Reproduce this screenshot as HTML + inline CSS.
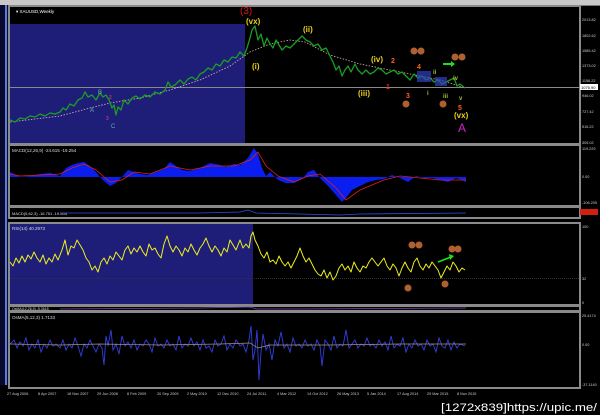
<!DOCTYPE html>
<html><head><meta charset="utf-8"><style>
html,body{margin:0;padding:0;background:#000;width:600px;height:415px;overflow:hidden}
svg{display:block}
text{font-family:"Liberation Sans",sans-serif}
</style></head><body>
<svg width="600" height="415" viewBox="0 0 600 415" xmlns="http://www.w3.org/2000/svg">
<rect width="600" height="415" fill="#000"/>
<rect x="0" y="0" width="600" height="5" fill="#c8c8c8"/>
<rect x="0" y="5" width="600" height="1" fill="#777"/>
<rect x="0" y="5" width="8" height="380" fill="#0a0a30"/>
<rect x="5" y="5" width="2" height="380" fill="#5a7fd0"/>
<g fill="none" stroke="#8a8a8a" stroke-width="2">
<rect x="9" y="6" width="571" height="138"/>
<rect x="9" y="145" width="571" height="61"/>
<rect x="9" y="207" width="571" height="11"/>
<rect x="9" y="223" width="571" height="82"/>
<rect x="9" y="306" width="571" height="5"/>
<rect x="9" y="312" width="571" height="76"/>
</g>
<rect x="10" y="24" width="235" height="119" fill="#1e1e78"/>
<line x1="10" y1="87.5" x2="579" y2="87.5" stroke="#8a8a8a"/>
<text x="16" y="13" fill="#fff" font-size="4.5">▾ XAUUSD,Weekly</text>
<polyline fill="none" stroke="#e0b0b0" stroke-width="0.8" stroke-dasharray="1.5,1.5" points="10,122 60,116 90,108 110,103 140,98 170,90 200,80 230,66 250,52 270,44 290,40 305,42 330,55 360,64 400,72 440,80 465,88"/>
<polyline fill="none" stroke="#1a9e22" stroke-width="1.3" stroke-linejoin="round" points="10,120 15,122 20,118 25,119 30,116 35,117 40,114 45,116 50,113 55,114 60,112 63,108 66,110 70,104 74,106 78,100 82,98 85,92 88,97 92,95 96,100 100,93 103,97 106,95 109,100 112,108 114,105 116,115 118,107 121,110 124,100 128,104 132,98 136,96 140,99 145,95 150,97 155,92 160,94 165,90 168,82 171,87 175,85 180,80 184,84 188,79 192,77 196,80 200,74 204,72 208,68 212,70 216,64 220,66 224,60 228,62 232,57 236,58 240,52 244,56 247,48 250,38 252,30 255,26 258,40 261,34 264,46 267,38 270,44 273,48 276,40 279,45 282,50 286,46 290,48 294,44 298,40 302,36 306,40 310,42 314,46 318,44 322,50 326,48 330,56 333,62 336,70 339,66 342,76 345,70 348,66 351,72 355,64 358,70 362,74 366,70 370,74 374,72 378,68 382,70 386,74 390,72 394,70 398,74 402,72 406,76 410,80 414,74 418,78 422,76 426,80 430,78 434,82 438,80 442,84 446,82 450,80 454,78 457,86 460,84 465,88"/>
<rect x="417" y="71" width="14" height="11" fill="#3040c0" opacity="0.7"/>
<rect x="435" y="77" width="12" height="9" fill="#3040c0" opacity="0.7"/>
<g font-weight="bold" font-size="8">
<text x="240" y="14" fill="#e01010" font-size="10" font-weight="normal">(3)</text>
<text x="246" y="24" fill="#e8d020">(vx)</text>
<text x="252" y="69" fill="#e8d020">(i)</text>
<text x="303" y="32" fill="#e8d020">(ii)</text>
<text x="358" y="96" fill="#e8d020">(iii)</text>
<text x="371" y="62" fill="#e8d020">(iv)</text>
<text x="454" y="118" fill="#e8d020">(vx)</text>
<text x="386" y="89" fill="#e03010" font-size="7">1</text>
<text x="391" y="63" fill="#ff6020" font-size="7">2</text>
<text x="406" y="98" fill="#ff6020" font-size="7">3</text>
<text x="417" y="69" fill="#ff6020" font-size="7">4</text>
<text x="458" y="110" fill="#ff6020" font-size="7">5</text>
<text x="433" y="74" fill="#a0c030" font-size="6">ii</text>
<text x="443" y="98" fill="#a0c030" font-size="6">iii</text>
<text x="427" y="95" fill="#a0c030" font-size="6">i</text>
<text x="453" y="80" fill="#a0c030" font-size="6">iv</text>
<text x="459" y="100" fill="#a0c030" font-size="6">v</text>
<text x="458" y="132" fill="#d020d0" font-size="12" font-weight="normal">A</text>
<text x="90" y="112" fill="#60b0b0" font-size="6" font-weight="normal">A</text>
<text x="98" y="94" fill="#60b0b0" font-size="6" font-weight="normal">B</text>
<text x="111" y="128" fill="#60b0b0" font-size="6" font-weight="normal">C</text>
<text x="106" y="120" fill="#c03080" font-size="5">3</text>
<text x="109" y="99" fill="#c03080" font-size="5">2</text>
</g>
<g fill="#b06030"><circle cx="414" cy="51" r="3.5"/><circle cx="421" cy="51" r="3.5"/><circle cx="455" cy="57" r="3.5"/><circle cx="462" cy="57" r="3.5"/><circle cx="406" cy="104" r="3.5"/><circle cx="443" cy="104" r="3.5"/></g>
<path d="M443 64 L452 64" stroke="#20e020" stroke-width="2"/><path d="M451 61 L455 64 L451 67Z" fill="#20e020"/>
<g fill="#ccc" font-size="3.8">
<text x="582" y="21">2013.82</text><text x="582" y="37">1802.62</text><text x="582" y="52">1585.42</text><text x="582" y="67">1373.02</text><text x="582" y="82">1156.22</text><text x="582" y="97">946.02</text><text x="582" y="113">727.42</text><text x="582" y="128">516.22</text><text x="582" y="144">305.02</text>
</g>
<rect x="580" y="84" width="18" height="6" fill="#fff"/><text x="581" y="89" fill="#000" font-size="4">1075.90</text>
<text x="12" y="152" fill="#ddd" font-size="4.5">MACD(12,26,9) -24.615 -19.254</text>
<path fill="#0a1ef0" d="M10,177 L10,172 20,177 30,176 40,174 50,173 60,176 66,168 72,165 78,163 84,162 90,166 96,172 100,177 104,181 110,186 116,183 122,177 128,170 134,172 140,174 148,175 156,172 164,169 170,162 176,166 182,170 190,171 200,168 210,163 220,165 226,167 234,164 240,165 248,158 254,148 258,154 262,168 266,176 270,172 274,176 278,180 286,183 294,183 302,179 308,172 314,170 320,178 328,186 336,195 342,202 346,198 352,190 360,186 368,182 376,180 384,179 392,175 400,178 408,182 416,176 424,178 432,178 440,180 448,182 456,178 462,180 466,182 466,177 Z"/>
<polyline fill="none" stroke="#e02020" stroke-width="0.8" points="10,174 20,176 40,175 60,174 72,168 84,164 96,170 110,182 122,180 134,172 150,174 170,166 190,170 210,166 234,166 250,160 258,152 266,166 278,176 294,182 308,176 320,174 336,188 346,200 360,190 384,180 400,176 420,178 440,180 466,180"/>
<g fill="#ccc" font-size="3.8"><text x="582" y="150">119.229</text><text x="582" y="178">0.00</text><text x="582" y="204">-106.205</text></g>
<text x="12" y="215" fill="#ddd" font-size="4">MACD(5,62,3) -16.751 -19.504</text>
<polyline fill="none" stroke="#3050e0" stroke-width="0.8" points="60,213 120,213 200,213 240,212 248,210 256,213 300,214 340,215 360,214 466,213"/>
<rect x="580" y="209" width="18" height="6" fill="#d02010"/>
<rect x="10" y="224" width="243" height="80" fill="#1e1e78"/>
<line x1="10" y1="278.5" x2="579" y2="278.5" stroke="#333" stroke-dasharray="1,1"/>
<text x="12" y="230" fill="#ddd" font-size="4.5">RSI(14) 40.2973</text>
<polyline fill="none" stroke="#f0f020" stroke-width="1" stroke-linejoin="round" points="10,262 13,266 16,258 19,263 22,256 25,262 28,255 31,259 34,252 37,258 40,262 43,255 46,264 49,258 52,262 55,254 58,260 62,250 65,240 68,255 71,246 74,248 77,240 80,245 83,250 86,258 89,262 92,270 95,266 98,272 101,262 104,258 107,264 110,256 113,260 116,252 119,256 122,260 125,250 128,246 131,254 134,248 137,252 140,246 143,252 146,256 149,244 152,250 155,248 158,254 161,258 164,244 167,236 170,246 173,252 176,246 179,250 182,256 185,248 188,252 191,244 194,250 197,255 200,248 203,244 206,238 209,246 212,252 215,246 218,250 221,256 224,248 227,252 230,240 233,245 236,250 240,240 243,248 246,244 249,248 251,236 253,232 255,240 258,246 261,254 264,258 267,252 270,262 273,260 276,264 279,256 282,262 285,266 288,262 291,268 294,262 297,256 300,248 303,256 306,262 309,258 312,264 315,270 318,274 321,276 324,270 327,278 330,272 333,280 336,276 339,268 342,264 345,270 348,266 351,272 354,262 357,268 360,272 363,266 366,268 369,262 372,258 375,262 378,266 381,262 384,258 387,266 390,270 393,264 396,268 399,276 402,268 405,262 408,268 411,272 414,262 417,258 420,266 423,270 426,264 429,268 432,262 435,266 438,270 441,278 444,272 447,266 450,270 453,262 456,266 459,272 462,268 465,270"/>
<g fill="#b06030"><circle cx="412" cy="245" r="3.5"/><circle cx="419" cy="245" r="3.5"/><circle cx="452" cy="249" r="3.5"/><circle cx="458" cy="249" r="3.5"/><circle cx="408" cy="288" r="3.5"/><circle cx="445" cy="284" r="3.5"/></g>
<path d="M438 262 L451 257" stroke="#20e020" stroke-width="1.6"/><path d="M449 254 L454 256 L450 260Z" fill="#20e020"/>
<g fill="#ccc" font-size="3.8"><text x="582" y="228">100</text><text x="582" y="280">32</text><text x="582" y="304">0</text></g>
<text x="12" y="310" fill="#ddd" font-size="3.5">OsMA(12,26,9) -5.3618</text>
<polyline fill="none" stroke="#8040c0" stroke-width="0.7" points="60,309 200,308 250,307 256,309 300,309 466,308"/>
<text x="12" y="319" fill="#ddd" font-size="4.5">OsMA(5,12,3) 1.7133</text>
<polyline fill="none" stroke="#3040e0" stroke-width="0.9" points="10,344 14,340 17,348 20,342 23,346 26,338 29,350 32,344 35,348 38,340 41,352 44,344 47,348 50,340 53,346 56,344 60,348 63,340 66,350 69,344 72,348 75,338 78,346 81,356 84,344 87,348 90,340 93,346 96,352 99,344 102,348 104,365 106,336 108,346 111,330 113,350 116,344 119,354 122,336 125,346 128,342 131,348 134,340 137,350 140,344 143,346 146,340 149,344 152,352 155,338 158,346 161,344 164,348 167,340 170,346 173,344 176,350 179,336 182,348 185,344 188,346 191,338 194,346 197,342 200,350 203,340 206,348 209,346 212,352 215,340 218,346 221,344 224,336 227,350 230,344 233,348 236,340 240,346 243,344 246,352 249,340 251,326 253,360 255,350 257,330 259,380 261,352 263,334 266,350 269,344 272,360 275,340 278,346 281,332 284,348 287,344 290,352 293,338 296,346 299,344 302,348 305,340 308,346 311,344 314,350 317,340 320,346 322,366 325,340 328,344 331,350 334,336 337,348 340,344 343,346 346,330 349,348 352,344 355,340 358,348 361,344 364,346 367,338 370,346 373,344 376,348 379,340 382,346 385,342 388,350 391,336 394,348 397,344 400,346 403,338 406,352 409,344 412,348 415,340 418,346 421,344 424,350 427,340 430,346 433,344 436,352 439,338 442,346 445,348 448,340 451,350 454,342 457,348 460,344 465,346"/>
<polyline fill="none" stroke="#b09070" stroke-width="0.7" points="10,344 60,345 100,344 160,345 220,344 250,343 258,348 270,345 330,345 400,344 466,344"/>
<g fill="#ccc" font-size="3.8"><text x="582" y="317">25.4174</text><text x="582" y="346">0.00</text><text x="582" y="386">-37.1140</text></g>
<g fill="#ccc" font-size="3.8">
<text x="7" y="395">27 Aug 2006</text><text x="38" y="395">8 Apr 2007</text><text x="67" y="395">18 Nov 2007</text><text x="97" y="395">29 Jun 2008</text><text x="127" y="395">8 Feb 2009</text><text x="157" y="395">20 Sep 2009</text><text x="187" y="395">2 May 2010</text><text x="217" y="395">12 Dec 2010</text><text x="247" y="395">24 Jul 2011</text><text x="277" y="395">4 Mar 2012</text><text x="307" y="395">14 Oct 2012</text><text x="337" y="395">26 May 2013</text><text x="367" y="395">5 Jan 2014</text><text x="397" y="395">17 Aug 2014</text><text x="427" y="395">29 Mar 2015</text><text x="457" y="395">8 Nov 2015</text>
</g>
<text x="441" y="411" fill="#fff" font-size="11" textLength="156" lengthAdjust="spacingAndGlyphs" font-family="Liberation Sans Narrow, Liberation Sans, sans-serif">[1272x839]https://upic.me/</text>
</svg>
</body></html>
